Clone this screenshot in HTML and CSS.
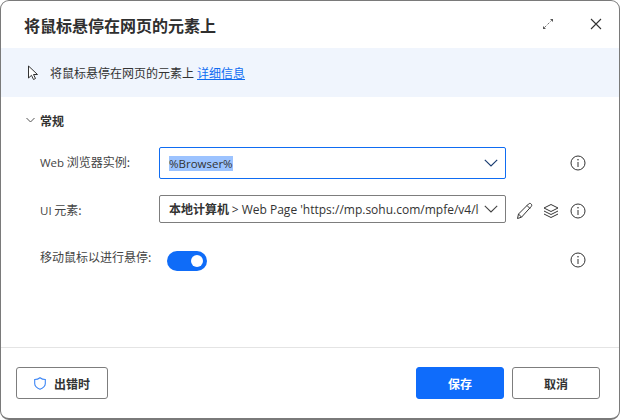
FILE: index.html
```html
<!DOCTYPE html>
<html lang="zh-CN">
<head>
<meta charset="utf-8">
<title>将鼠标悬停在网页的元素上</title>
<link rel="stylesheet" href="styles.css">
</head>
<body>
<div class="dialog">
  <header class="head">
    <h1 class="title">将鼠标悬停在网页的元素上</h1>
    <div class="head-tools">
      <svg class="ic-expand" width="12" height="12" viewBox="0 0 12 12"><path d="M2.500 9.500L9.500 2.500" stroke="#777" stroke-width="1" stroke-dasharray="2.600 1.600" fill="none"/><path d="M1 8v3h3L1 8zM11 4V1H8l3 3z" fill="#555"/></svg>
      <svg class="ic-close" width="12" height="12" viewBox="0 0 12 12"><path d="M1 1l10 10M11 1L1 11" stroke="#333" stroke-width="1.100" fill="none"/></svg>
    </div>
  </header>
  <div class="banner">
    <svg class="ic-cursor" width="12" height="16" viewBox="0 0 12 16"><path d="M1.500 1v12l3-2.700 2 4.200 2-1-2-4h4z" fill="#fff" stroke="#333" stroke-width="1" stroke-linejoin="round"/></svg>
    <span>将鼠标悬停在网页的元素上</span>
    <a class="more" href="#">详细信息</a>
  </div>
  <main class="body">
    <div class="section">
      <svg width="9" height="6" viewBox="0 0 9 6"><path d="M.5 1l4 4 4-4" stroke="#555" fill="none"/></svg>
      <span>常规</span>
    </div>
    <div class="form">
      <label class="lbl lbl-web"><span class="lat">Web</span> 浏览器实例:</label>
      <div class="field focus">
        <span class="val"><span class="sel lat">%Browser%</span></span>
        <svg class="chev" width="14" height="8" viewBox="0 0 14 8"><path d="M.8.8L7 7l6.200-6.200" stroke="#1d3f73" stroke-width="1.200" fill="none"/></svg>
      </div>
      <div class="tools"></div>
      <svg class="info" width="16" height="16" viewBox="0 0 16 16"><circle cx="8" cy="8" r="7" fill="none" stroke="#333"/><path d="M8 7v5" stroke="#333"/><circle cx="8" cy="4.800" r=".8" fill="#333"/></svg>

      <label class="lbl lbl-ui"><span class="lat">UI</span> 元素:</label>
      <div class="field plain">
        <span class="val"><b>本地计算机</b> <span class="lat lat-val">&gt; Web Page 'https://mp.sohu.com/mpfe/v4/login'</span></span>
        <svg class="chev" width="14" height="8" viewBox="0 0 14 8"><path d="M.8.8L7 7l6.200-6.200" stroke="#444" stroke-width="1.100" fill="none"/></svg>
      </div>
      <div class="tools low">
        <svg width="17" height="18" viewBox="0 0 17 18"><path d="M1.500 16.500l1-4.500L12.500 2c.8-.8 2-.8 2.700 0s.7 1.800 0 2.500L5.500 15.200zM2.500 12l3 3.200M11 3.500l3 3" fill="none" stroke="#333"/></svg>
        <svg width="16" height="16" viewBox="0 0 16 16"><path d="M8 1.500l7 3.500-7 3.500L1 5z" fill="none" stroke="#333"/><path d="M1 8l7 3.500L15 8M1 11l7 3.500 7-3.500" fill="none" stroke="#333"/></svg>
      </div>
      <svg class="info low" width="16" height="16" viewBox="0 0 16 16"><circle cx="8" cy="8" r="7" fill="none" stroke="#333"/><path d="M8 7v5" stroke="#333"/><circle cx="8" cy="4.800" r=".8" fill="#333"/></svg>

      <label class="lbl lbl-toggle">移动鼠标以进行悬停:</label>
      <div class="toggle-cell"><span class="toggle"><i class="knob"></i></span></div>
      <div class="tools"></div>
      <svg class="info high" width="16" height="16" viewBox="0 0 16 16"><circle cx="8" cy="8" r="7" fill="none" stroke="#333"/><path d="M8 7v5" stroke="#333"/><circle cx="8" cy="4.800" r=".8" fill="#333"/></svg>
    </div>
  </main>
  <footer class="foot">
    <button class="btn err">
      <svg width="12" height="13" viewBox="0 0 12 13"><path d="M6 .7c1.500 1.200 3.200 1.800 5.300 1.800v4c0 2.600-2 4.500-5.300 5.800C2.700 11 .7 9.100.7 6.500v-4C2.800 2.500 4.500 1.900 6 .7z" fill="none" stroke="#3d86f5" stroke-width="1.100"/></svg>
      <span>出错时</span>
    </button>
    <div class="spacer"></div>
    <button class="btn primary">保存</button>
    <button class="btn cancel">取消</button>
  </footer>
</div>
</body>
</html>
```
FILE: styles.css
```css
* { box-sizing: border-box; }
html, body { margin: 0; padding: 0; height: 100%; background: #fff; }
body { font-family: "Noto Sans CJK SC", sans-serif; font-size: 12px; color: #333; }
.lat { font-family: "Open Sans", sans-serif; font-size: 11.500px; }
.lat-val { font-size: 12px; }
.dialog { width: 620px; height: 420px; display: flex; flex-direction: column; background: #fff; border: 1px solid #7a7a7a; border-bottom-width: 2px; border-radius: 9px; overflow: hidden; }
.head { height: 47px; flex: none; display: flex; align-items: center; justify-content: space-between; padding: 0 17px 0 23px; }
.title { margin: 0; font-size: 16px; font-weight: 700; color: #2f2f2f; line-height: 20px; }
.head-tools { display: flex; align-items: center; gap: 36px; position: relative; top: -1px; }
.banner { height: 49px; flex: none; background: #f0f5fd; display: flex; align-items: center; padding-left: 26px; color: #333; }
.ic-cursor { margin-right: 11px; }
.more { color: #0f6cf2; margin-left: 3px; text-decoration: underline; }
.body { flex: 1; padding: 0 14px 0 25px; }
.section { height: 50px; padding-bottom: 4px; display: flex; align-items: center; gap: 5px; font-weight: 700; color: #333; }
.form { display: grid; grid-template-columns: 119px 347px 65px 16px; grid-template-rows: 32px 28px 44px; row-gap: 16px; padding-left: 14px; align-items: center; }
.lbl { color: #444; position: relative; top: -1px; }
.lbl-web { top: -2px; }
.lbl-ui { top: 0; }
.lbl-toggle { padding-bottom: 8px; }
.field { display: flex; align-items: center; background: #fff; padding-left: 9px; padding-right: 7px; border-radius: 2px; white-space: nowrap; }
.field.focus { height: 32px; border: 1px solid #0f6cf2; padding-bottom: 2px; }
.field.focus .chev { margin-top: 2px; }
.field.plain { height: 28px; border: 1px solid #7d7d7d; }
.val { flex: 1; overflow: hidden; min-width: 0; margin-right: 5px; }
.sel { background: #9cc3ff; }
.chev { flex: none; }
.tools { display: flex; align-items: center; gap: 10px; padding-left: 10px; }
.low { margin-top: 4px; }
.high { margin-bottom: 2px; }
.info { justify-self: end; position: relative; left: -1px; }
.toggle-cell { padding-left: 8px; display: flex; }
.toggle { width: 40px; height: 20px; background: #0f6cf8; border-radius: 10px; display: flex; align-items: center; justify-content: flex-end; padding-right: 4px; }
.knob { width: 12px; height: 12px; background: #fff; border-radius: 50%; display: block; }
.foot { height: 71px; flex: none; border-top: 1px solid #e4e4e4; display: flex; align-items: center; gap: 8px; padding: 0 19px 0 15px; }
.spacer { flex: 1; }
.btn { height: 32px; border-radius: 3px; border: 1px solid #7d7d7d; background: #fff; font: inherit; font-weight: 700; color: #333; display: flex; align-items: center; justify-content: center; padding: 0; }
.err { width: 92px; gap: 8px; }
.primary { width: 88px; background: #0f6cfb; border-color: #0f6cfb; color: #fff; }
.cancel { width: 88px; }
```
